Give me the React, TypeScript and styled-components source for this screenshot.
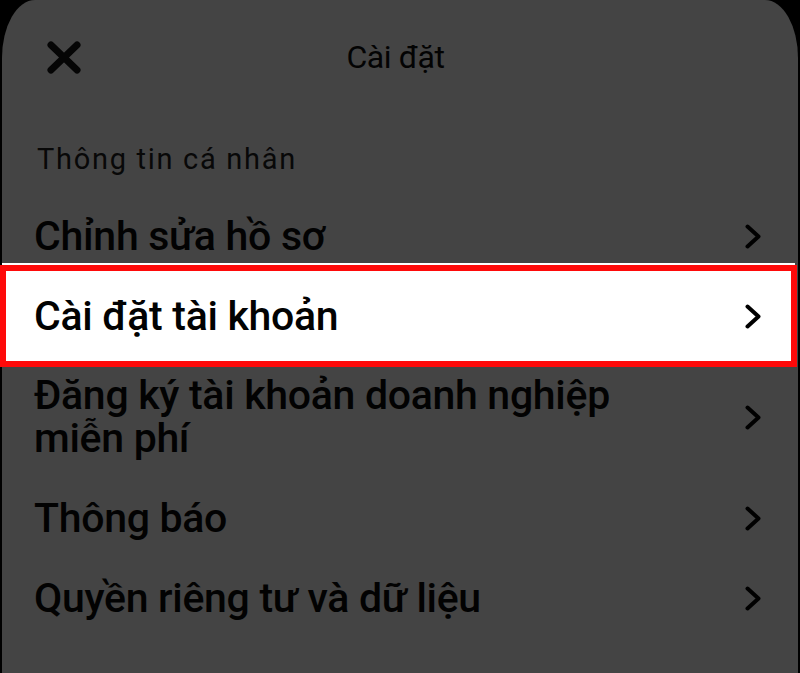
import React from "react";
import styled, { createGlobalStyle, css } from "styled-components";

const GlobalStyle = createGlobalStyle`
  html, body {
    margin: 0;
    padding: 0;
    background: #000;
  }
  body {
    font-family: Roboto, "Liberation Sans", Arial, sans-serif;
    color: #000;
  }
  * { box-sizing: border-box; }
`;

const Panel = styled.div`
  margin: 0 2px;
  min-height: 673px;
  background: #444444;
  border-radius: 33px 33px 0 0 / 58px 58px 0 0;
  display: flex;
  flex-direction: column;
`;

const Header = styled.header`
  height: 114px;
  display: grid;
  grid-template-columns: 1fr auto 1fr;
  align-items: center;
  padding: 0 54px 0 45px;
`;

const CloseButton = styled.button`
  width: 34px;
  height: 33px;
  padding: 0;
  border: 0;
  background: none;
  display: flex;
  justify-self: start;
  cursor: pointer;
`;

const Title = styled.h1`
  margin: 0;
  font-size: 32px;
  font-weight: 400;
  line-height: 40px;
  letter-spacing: -0.4px;
  color: #030303;
`;

const SectionLabel = styled.div`
  padding: 25px 36px 0 35px;
  font-size: 29px;
  line-height: 40px;
  font-weight: 400;
  letter-spacing: 1.7px;
  color: #080808;
`;

const List = styled.ul`
  list-style: none;
  margin: 17px 0 0;
  padding: 0;
`;

const Row = styled.li<{ $highlighted?: boolean }>`
  position: relative;
  isolation: isolate;
  min-height: 80px;
  display: flex;
  align-items: center;
  justify-content: space-between;
  padding: 18px 37px 18px 32px;
  ${(p) =>
    p.$highlighted &&
    css`
      &::before {
        content: "";
        position: absolute;
        top: -13px;
        bottom: -9px;
        left: 0;
        right: 3px;
        background: #fff;
        z-index: -1;
      }
      &::after {
        content: "";
        position: absolute;
        top: -11px;
        bottom: -11px;
        left: -2px;
        right: 1px;
        border: 6px solid #fe0a0a;
        pointer-events: none;
      }
    `}
`;

const RowLabel = styled.span`
  font-size: 41px;
  font-weight: 500;
  line-height: 43px;
  letter-spacing: -0.3px;
  max-width: 640px;
  color: #020202;
`;

const Chevron = () => (
  <svg width="16" height="25" viewBox="0 0 16 25" fill="none">
    <path
      d="M2.5 2.5 L13.5 12.5 L2.5 22.5"
      stroke="#000"
      strokeWidth="4"
      strokeLinecap="round"
      strokeLinejoin="round"
    />
  </svg>
);

const CloseIcon = () => (
  <svg width="34" height="33" viewBox="0 0 34 33" fill="none">
    <path
      d="M4 4 L30 29 M30 4 L4 29"
      stroke="#050505"
      strokeWidth="7"
      strokeLinecap="round"
    />
  </svg>
);

const items = [
  { label: "Chỉnh sửa hồ sơ" },
  { label: "Cài đặt tài khoản", highlighted: true },
  { label: "Đăng ký tài khoản doanh nghiệp miễn phí" },
  { label: "Thông báo" },
  { label: "Quyền riêng tư và dữ liệu" },
];

export default function App() {
  return (
    <>
      <GlobalStyle />
      <Panel>
        <Header>
          <CloseButton aria-label="Đóng">
            <CloseIcon />
          </CloseButton>
          <Title>Cài đặt</Title>
          <span />
        </Header>
        <SectionLabel>Thông tin cá nhân</SectionLabel>
        <List>
          {items.map((it) => (
            <Row key={it.label} $highlighted={it.highlighted}>
              <RowLabel>{it.label}</RowLabel>
              <Chevron />
            </Row>
          ))}
        </List>
      </Panel>
    </>
  );
}
